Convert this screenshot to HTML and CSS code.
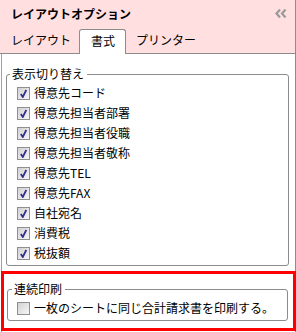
FILE: index.html
```html
<!DOCTYPE html>
<html lang="ja">
<head>
<meta charset="utf-8">
<link rel="stylesheet" href="styles.css">
</head>
<body>
<div class="panel">
  <div class="header">
    <div class="title-row">
      <span class="title">レイアウトオプション</span>
      <svg class="collapse" width="12" height="9" viewBox="0 0 12 9">
        <path d="M5 0.5 L1.5 4.5 L5 8.5" fill="none" stroke="#9a9a9a" stroke-width="2.2"/>
        <path d="M10.5 0.5 L7 4.5 L10.5 8.5" fill="none" stroke="#9a9a9a" stroke-width="2.2"/>
      </svg>
    </div>
    <div class="tabs">
      <span class="tab">レイアウト</span>
      <span class="tab active">書式</span>
      <span class="tab">プリンター</span>
    </div>
  </div>
  <div class="body">
    <fieldset class="group main">
      <legend>表示切り替え</legend>
      <label class="item"><span class="cb checked"></span>得意先コード</label>
      <label class="item"><span class="cb checked"></span>得意先担当者部署</label>
      <label class="item"><span class="cb checked"></span>得意先担当者役職</label>
      <label class="item"><span class="cb checked"></span>得意先担当者敬称</label>
      <label class="item"><span class="cb checked"></span>得意先TEL</label>
      <label class="item"><span class="cb checked"></span>得意先FAX</label>
      <label class="item"><span class="cb checked"></span>自社宛名</label>
      <label class="item"><span class="cb checked"></span>消費税</label>
      <label class="item"><span class="cb checked"></span>税抜額</label>
    </fieldset>
    <div class="highlight">
      <fieldset class="group sub">
        <legend>連続印刷</legend>
        <label class="item"><span class="cb"></span>一枚のシートに同じ合計請求書を印刷する。</label>
      </fieldset>
    </div>
  </div>
</div>
</body>
</html>
```
FILE: styles.css
```css
* { box-sizing: border-box; }
html, body {
  margin: 0;
  padding: 0;
  background: #fff;
}
body {
  width: 296px;
  height: 332px;
  font-family: "Noto Sans CJK JP", "Noto Sans", sans-serif;
  font-size: 12px;
  color: #000;
  overflow: hidden;
}
.panel {
  width: 296px;
  height: 332px;
  display: flex;
  flex-direction: column;
  border-right: 1px solid #8c8c8c;
}
.header {
  background: #ffdfdf;
  border-bottom: 1px solid #8c8c8c;
  height: 54px;
  flex: none;
  display: flex;
  flex-direction: column;
}
.title-row {
  height: 29px;
  display: flex;
  align-items: center;
  justify-content: space-between;
  padding: 0 8px 0 11px;
}
.title {
  font-weight: bold;
  font-size: 12px;
  line-height: 16px;
  margin-top: -2px;
}
.collapse { display: block; margin-top: -2px; }
.tabs {
  display: flex;
  align-items: flex-end;
  height: 24px;
  padding-left: 11px;
}
.tab {
  height: 24px;
  line-height: 22px;
  padding: 0 10px 0 0;
}
.tab.active {
  background: #fff;
  border: 1px solid #8c8c8c;
  border-bottom: none;
  border-radius: 3px 3px 0 0;
  height: 25px;
  margin-bottom: -1px;
  padding: 0 10px 0 11px;
  margin-right: 10px;
  margin-left: -2px;
}
.body {
  flex: 1;
  display: flex;
  flex-direction: column;
  margin-left: 1px;
  border-left: 1px solid #a0a0a0;
  padding-top: 13px;
}
.group {
  margin: 0;
  border: 1px solid #8c8c8c;
  border-radius: 3px;
  min-inline-size: 0;
}
.group legend {
  padding: 0 3px 0 2px;
  line-height: 14px;
}
.main {
  margin-left: 4px;
  width: 283px;
  padding: 2px 0 2px 10px;
}
.main legend { margin-left: -7px; }
.item {
  display: flex;
  align-items: center;
  height: 20px;
  line-height: 14px;
  white-space: nowrap;
}
.cb {
  width: 13px;
  height: 13px;
  border: 1px solid #8e8f8f;
  background: linear-gradient(135deg, #d2d2d2, #f6f6f6);
  margin-right: 4px;
  flex: none;
  position: relative;
}
.cb.checked::after {
  content: "";
  position: absolute;
  left: 2px;
  top: 1px;
  width: 7px;
  height: 9px;
  background: url("data:image/svg+xml;utf8,<svg xmlns='http://www.w3.org/2000/svg' width='7' height='9' viewBox='0 0 7 9'><path d='M0.8 5 L2.8 8 L6.3 0.8' fill='none' stroke='%232f2f8f' stroke-width='1.8'/></svg>") no-repeat;
}
.highlight {
  margin-top: 5px;
  margin-left: -1px;
  width: 295px;
  height: 60px;
  border: 3px solid #f00;
  padding-top: 8px;
  flex: none;
}
.sub {
  margin-left: 3px;
  width: 281px;
  padding: 2px 0 2px 9px;
}
.sub legend { margin-left: -5px; }
```
